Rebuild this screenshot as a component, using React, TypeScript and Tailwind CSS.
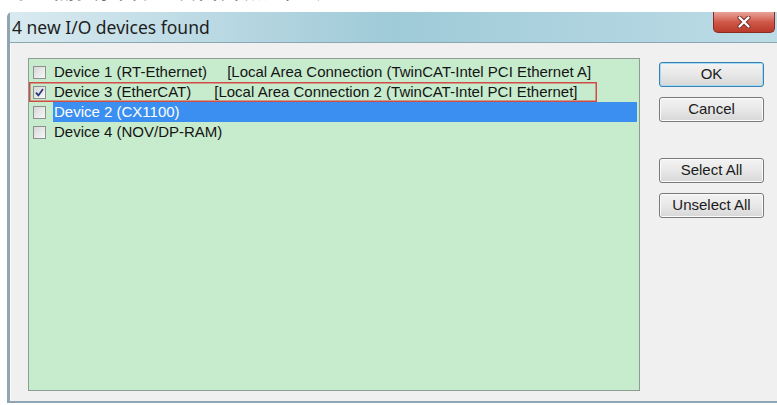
import React from 'react';

type Device = {
  name: string;
  link?: string;
  linkGap?: number;
  checked?: boolean;
  marked?: boolean;
  selected?: boolean;
};

const devices: Device[] = [
  { name: 'Device 1 (RT-Ethernet)', link: '[Local Area Connection (TwinCAT-Intel PCI Ethernet A]', linkGap: 20 },
  { name: 'Device 3 (EtherCAT)', link: '[Local Area Connection 2 (TwinCAT-Intel PCI Ethernet]', linkGap: 23, checked: true, marked: true },
  { name: 'Device 2 (CX1100)', selected: true },
  { name: 'Device 4 (NOV/DP-RAM)' },
];

const CheckBox: React.FC<{ checked?: boolean }> = ({ checked }) => (
  <span className="w-[13px] h-[13px] shrink-0 border border-[#8e8f8f] bg-gradient-to-br from-[#d8d8d8] to-[#f7f7f7] flex items-center justify-center">
    {checked && (
      <svg width="9" height="9" viewBox="0 0 9 9">
        <path d="M1 4.6 L3.4 7.4 L8 1" fill="none" stroke="#23337c" strokeWidth="1.7" />
      </svg>
    )}
  </span>
);

const DialogButton: React.FC<{ label: string; primary?: boolean; className?: string }> = ({ label, primary, className }) => (
  <button
    className={
      'w-[105px] h-[25px] rounded-[3px] border text-[15px] text-[#1b1b1b] bg-gradient-to-b from-[#f3f3f3] via-[#e8e8e8] to-[#d7d7d7] ' +
      (primary ? 'border-[#3c7fb1] shadow-[inset_0_0_0_1px_#9fdcf5] ' : 'border-[#7a7a7a] shadow-[inset_0_0_0_1px_#fbfbfb] ') +
      (className ?? '')
    }
  >
    {label}
  </button>
);

export default function App() {
  return (
    <div className="w-[777px] h-[405px] bg-white overflow-hidden font-['Liberation_Sans',Arial,sans-serif]">
      {/* tail of the caption line above the dialog */}
      <div className="h-[12px] overflow-hidden">
        <div className="-mt-[27px] pl-[4px] text-[24px] leading-[30px] text-black font-['Noto_Sans_CJK_SC',sans-serif] whitespace-nowrap">
          勾选需要扫描的设备并点击确定
        </div>
      </div>

      <div className="ml-[7px] h-[391px] flex flex-col border-l-[3px] border-b-[2px] border-[#8ea6b4] rounded-tl-[5px]">
        {/* title bar */}
        <div className="h-[31px] shrink-0 flex items-start justify-between bg-gradient-to-r from-[#d9eaf0] via-[#9fcad8] to-[#bcdce6] border-b border-[#8aa7b2]">
          <span className="pl-[2px] pt-[4px] text-[17.5px] text-[#1e1e1e] font-['Noto_Sans',sans-serif] leading-[22px]">
            4 new I/O devices found
          </span>
          <div className="w-[62px] h-[21px] mr-[2px] rounded-b-[5px] border border-t-0 border-[#8b2c22] bg-gradient-to-b from-[#e9a398] via-[#d0584a] to-[#b93a2a] flex items-center justify-center">
            <svg width="14" height="12" viewBox="0 0 14 12">
              <path d="M2.5 1.5 L11.5 10.5 M11.5 1.5 L2.5 10.5" stroke="#6b2a22" strokeWidth="4" strokeLinecap="round" />
              <path d="M2.5 1.5 L11.5 10.5 M11.5 1.5 L2.5 10.5" stroke="#ffffff" strokeWidth="2.4" strokeLinecap="round" />
            </svg>
          </div>
        </div>

        {/* client area */}
        <div className="flex-1 bg-[#f0f0f0] flex items-start pl-[17px] pt-[15px] border-l border-[#fafafa]">
          <div className="w-[612px] h-[333px] bg-[#c7ebcd] border border-[#8c9c92] pt-[3px] text-[15px] text-[#141414]">
            {devices.map((d) => (
              <div key={d.name} className="h-[20px] flex items-center">
                <div
                  className={
                    'h-[20px] flex items-center pl-[4px] ' +
                    (d.marked ? 'w-[568px] ring-[1.5px] ring-inset ring-[#d24b45]' : 'w-full')
                  }
                >
                  <CheckBox checked={d.checked} />
                  <div
                    className={
                      'ml-[7px] h-[20px] flex items-center whitespace-nowrap ' +
                      (d.selected ? 'flex-1 mr-[2px] bg-[#3b8ff0] text-white pl-[1px]' : 'pl-[1px]')
                    }
                  >
                    <span>{d.name}</span>
                    {d.link && <span style={{ marginLeft: d.linkGap }}>{d.link}</span>}
                  </div>
                </div>
              </div>
            ))}
          </div>

          <div className="ml-[19px] pt-[4px] flex flex-col">
            <DialogButton label="OK" primary />
            <DialogButton label="Cancel" className="mt-[10px]" />
            <DialogButton label="Select All" className="mt-[36px]" />
            <DialogButton label="Unselect All" className="mt-[10px]" />
          </div>
        </div>
      </div>
    </div>
  );
}
